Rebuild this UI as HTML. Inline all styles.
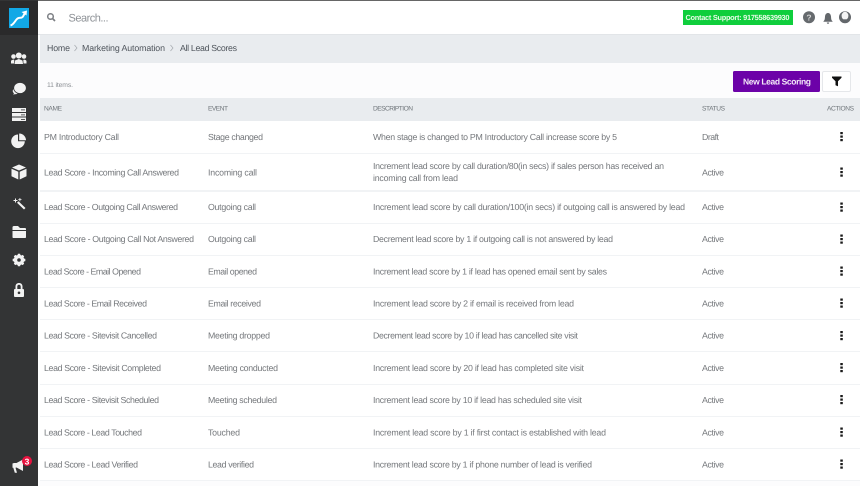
<!DOCTYPE html>
<html><head><meta charset="utf-8"><title>All Lead Scores</title>
<style>
html,body{margin:0;padding:0;width:860px;height:486px;overflow:hidden;background:#fff}
svg{display:block;filter:blur(.35px)}
text{font-family:"Liberation Sans",Arial,sans-serif;text-rendering:geometricPrecision}
.t text{font-size:8.8px;fill:#75787c}
.h text{font-size:6.6px;fill:#70767b}
.b text{font-size:8.8px;fill:#4f555c}
</style></head><body>
<svg xmlns="http://www.w3.org/2000/svg" width="860" height="486" viewBox="0 0 860 486">
<defs><g id="k" fill="#1a1a1a"><rect x="840.300" y="0" width="2.500" height="2.200"/><rect x="840.300" y="3.500" width="2.500" height="2.200"/><rect x="840.300" y="7" width="2.500" height="2.200"/></g></defs>
<rect width="860" height="486" fill="#fff"/>
<rect x="38" y="35" width="822" height="28" fill="#e9ecef"/>
<rect x="38" y="34" width="822" height="1" fill="#e2e5e8"/>
<rect x="38" y="63" width="822" height="35" fill="#fcfcfd"/>
<rect x="40" y="98" width="820" height="23" fill="#e9ecef"/>
<rect x="38" y="35" width="2" height="451" fill="#fff"/>
<rect x="0" y="0" width="860" height="1" fill="#666"/>
<rect x="0" y="0" width="38" height="486" fill="#333435"/>
<rect x="0" y="1" width="38" height="34" fill="#2a2a2b"/>
<!-- logo -->
<rect x="9" y="8" width="20" height="20" fill="#12a8e6"/>
<path d="M10.500 25.500C14 24.500 15 20.500 17.500 18.500C20 16.800 21.500 18.800 23 16.500L25.500 12" fill="none" stroke="#fff" stroke-width="2"/>
<path d="M21.500 12L27 10.500L26.500 15.500Z" fill="#fff"/>
<!-- sidebar icons -->
<g fill="#f2f2f2">
<circle cx="18.800" cy="55.500" r="3"/><path d="M14.500 64L15 60.500L18.800 59L22.500 60.500L23 64Z"/>
<circle cx="13.500" cy="56.500" r="2.300"/><path d="M11 63.500H14L14.300 60L13.500 59.500L11.500 60.300L11 61Z"/>
<circle cx="24" cy="56.500" r="2.300"/><path d="M26.500 63.500H23.500L23.300 60L24 59.500L26 60.300L26.500 61Z"/>
<ellipse cx="16" cy="91" rx="3.300" ry="3"/>
<path d="M13 94.500L15 92.500L17 94Z"/>
<ellipse cx="20" cy="88" rx="6.300" ry="5.500" stroke="#333435" stroke-width=".8"/>
<path d="M12 108H26V112H12ZM12 113H26V116.500H12ZM12 117.500H26V121H12Z"/>
<path d="M18 134.500A6.800 6.800 0 1 0 24.800 141.300H18Z"/>
<path d="M19.200 133.500A6.800 6.800 0 0 1 26 140.200H19.200Z"/>
<path d="M19 164.500L26 167.500L19 170.500L12 167.500ZM11.500 168.800L18.300 171.800V179.500L11.500 176.300ZM26.500 168.800V176.300L19.700 179.500V171.800Z"/>
<path d="M17 202.800L18.500 201.300L25.500 208L24 209.500Z"/>
<path d="M15 198.500h1v1.500h1.500v1H16v1.500h-1V201h-1.500v-1H15ZM19.500 198h.8v1.200h1.200v.8h-1.200v1.200h-.8V200h-1.200v-.8h1.200Z"/>
<path d="M12.500 227.500C12.500 226.500 13 226 14 226H18L20 228H25C25.800 228 26 228.500 26 229.200V230H12.500ZM12.500 231H26V237C26 237.700 25.700 238 25 238H13.500C12.800 238 12.500 237.700 12.500 237Z"/>
<g transform="translate(19 260) scale(.72) translate(-19 -263.200)"><path fill-rule="evenodd" d="M17.500 254.500H20.500L21 256.300L22.500 257L24.200 256L26.200 258.100L25.300 259.700L26 261.200L27.800 261.700V264.700L26 265.200L25.300 266.700L26.200 268.300L24.200 270.400L22.500 269.400L21 270.100L20.500 271.900H17.500L17 270.100L15.500 269.400L13.800 270.400L11.800 268.300L12.700 266.700L12 265.200L10.200 264.700V261.700L12 261.200L12.700 259.700L11.800 258.100L13.800 256L15.500 257L17 256.300ZM19 260.700A2.500 2.500 0 1 0 19 265.700A2.500 2.500 0 1 0 19 260.700Z"/></g>
<path fill-rule="evenodd" d="M15 289H15.500V286.500C15.500 284.200 17 283 19 283S22.500 284.200 22.500 286.500V289H23C23.600 289 24 289.400 24 290V296C24 296.600 23.600 297 23 297H15C14.400 297 14 296.600 14 296V290C14 289.400 14.400 289 15 289ZM17.300 289H20.700V286.500C20.700 285.300 20 284.700 19 284.700S17.300 285.300 17.300 286.500ZM19 291.500A1.300 1.300 0 1 0 19 294.100A1.300 1.300 0 1 0 19 291.500Z"/>
<path d="M12.500 463.500L14 463H16.500L23 459.500V471L16.500 467.500L15.500 467.800L17 472.800H14.800L13.300 467.800H12.500Z"/>
</g>
<g fill="#333435"><rect x="21" y="109.500" width="4" height=".8"/><rect x="21" y="114.500" width="4" height=".8"/><rect x="21" y="119" width="4" height=".8"/></g>
<circle cx="27" cy="461" r="5" fill="#e8123f"/>
<text x="27" y="464.300" font-size="8.500" font-weight="bold" fill="#fff" text-anchor="middle">3</text>
<!-- search -->
<circle cx="50.500" cy="16.500" r="2.800" fill="none" stroke="#7c7f84" stroke-width="1.500"/>
<path d="M52.500 18.500L55 21" stroke="#7c7f84" stroke-width="1.700"/>
<text x="68.500" y="21.500" font-size="11" fill="#8d9196" textLength="40">Search...</text>
<!-- breadcrumbs -->
<g class="b">
<text x="47" y="51" textLength="23">Home</text>
<text x="82" y="51" textLength="83">Marketing Automation</text>
<text x="180" y="51" textLength="57">All Lead Scores</text>
</g>
<path d="M74.500 45L77 48L74.500 51M170.500 45L173 48L170.500 51" fill="none" stroke="#a5a9ae" stroke-width=".7"/>
<text x="47" y="87" font-size="6.800" fill="#8d9196" textLength="26">11 items.</text>
<!-- top right -->
<rect x="683" y="10" width="110" height="15" fill="#0fce3c"/>
<text x="685.500" y="20" font-size="7.400" font-weight="bold" fill="#eafbe9" textLength="104">Contact Support: 917558639930</text>
<circle cx="809" cy="17.300" r="6" fill="#666a6e"/>
<text x="809" y="20.500" font-size="8.500" font-weight="bold" fill="#d6d6d6" text-anchor="middle">?</text>
<path d="M823.500 21.200C825 20 824.800 18.500 825 16.500C825.200 14.300 826.500 13 828 13S830.800 14.300 831 16.500C831.200 18.500 831 20 832.500 21.200V21.800H823.500ZM826.800 22.500H829.200C829.200 23.500 828.700 23.800 828 23.800S826.800 23.500 826.800 22.500Z" fill="#63676b"/>
<circle cx="845" cy="17.300" r="6" fill="#63676b"/>
<ellipse cx="845" cy="15.800" rx="3.400" ry="4" fill="#f4f4f4"/>
<path d="M840.500 20.500C842 18.800 848 18.800 849.500 20.500L847.500 22.500H842.500Z" fill="#63676b"/>
<!-- buttons -->
<rect x="733" y="71" width="87" height="21" rx="1.500" fill="#6c02a8"/>
<text x="743" y="84.500" font-size="8.500" font-weight="bold" fill="#f3e8f8" textLength="68">New Lead Scoring</text>
<rect x="822.500" y="71.500" width="28" height="20" rx="1.500" fill="#fff" stroke="#e5e7ea"/>
<path d="M832 76.500H841.500V77.800L838 81.300V86.300L835.500 85.300V81.300L832 77.800Z" fill="#111"/>
<!-- table header -->
<g class="h">
<text x="44" y="110.500" textLength="18">NAME</text>
<text x="208" y="110.500" textLength="20">EVENT</text>
<text x="373" y="110.500" textLength="40">DESCRIPTION</text>
<text x="702" y="110.500" textLength="23">STATUS</text>
<text x="827" y="110.500" textLength="27">ACTIONS</text>
</g>
<!-- row lines -->
<g fill="#f1f3f5">
<rect x="40" y="153" width="820" height="1"/><rect x="40" y="190" width="820" height="2"/>
<rect x="40" y="223" width="820" height="1"/><rect x="40" y="255" width="820" height="1"/>
<rect x="40" y="287" width="820" height="1"/><rect x="40" y="319" width="820" height="1"/>
<rect x="40" y="351" width="820" height="1"/><rect x="40" y="384" width="820" height="1"/>
<rect x="40" y="416" width="820" height="1"/><rect x="40" y="448" width="820" height="1"/>
<rect x="40" y="480" width="820" height="1"/>
</g>
<rect x="40" y="481" width="820" height="5" fill="#fcfcfd"/>
<g class="t">
<text x="44" y="140" textLength="75">PM Introductory Call</text>
<text x="208" y="140" textLength="55">Stage changed</text>
<text x="373" y="140" textLength="244">When stage is changed to PM Introductory Call increase score by 5</text>
<text x="702" y="140" textLength="17">Draft</text>

<text x="44" y="175.500" textLength="135">Lead Score - Incoming Call Answered</text>
<text x="208" y="175.500" textLength="49">Incoming call</text>
<text x="373" y="169" textLength="291">Increment lead score by call duration/80(in secs) if sales person has received an</text>
<text x="373" y="181" textLength="85">incoming call from lead</text>
<text x="702" y="175.500" textLength="22">Active</text>

<text x="44" y="210" textLength="134">Lead Score - Outgoing Call Answered</text>
<text x="208" y="210" textLength="48">Outgoing call</text>
<text x="373" y="210" textLength="312">Increment lead score by call duration/100(in secs) if outgoing call is answered by lead</text>
<text x="702" y="210" textLength="22">Active</text>

<text x="44" y="242" textLength="150">Lead Score - Outgoing Call Not Answered</text>
<text x="208" y="242" textLength="48">Outgoing call</text>
<text x="373" y="242" textLength="240">Decrement lead score by 1 if outgoing call is not answered by lead</text>
<text x="702" y="242" textLength="22">Active</text>

<text x="44" y="274.500" textLength="97">Lead Score - Email Opened</text>
<text x="208" y="274.500" textLength="49">Email opened</text>
<text x="373" y="274.500" textLength="234">Increment lead score by 1 if lead has opened email sent by sales</text>
<text x="702" y="274.500" textLength="22">Active</text>

<text x="44" y="306.500" textLength="103">Lead Score - Email Received</text>
<text x="208" y="306.500" textLength="53">Email received</text>
<text x="373" y="306.500" textLength="201">Increment lead score by 2 if email is received from lead</text>
<text x="702" y="306.500" textLength="22">Active</text>

<text x="44" y="338.500" textLength="113">Lead Score - Sitevisit Cancelled</text>
<text x="208" y="338.500" textLength="62">Meeting dropped</text>
<text x="373" y="338.500" textLength="205">Decrement lead score by 10 if lead has cancelled site visit</text>
<text x="702" y="338.500" textLength="22">Active</text>

<text x="44" y="371" textLength="117">Lead Score - Sitevisit Completed</text>
<text x="208" y="371" textLength="70">Meeting conducted</text>
<text x="373" y="371" textLength="211">Increment lead score by 20 if lead has completed site visit</text>
<text x="702" y="371" textLength="22">Active</text>

<text x="44" y="403" textLength="115">Lead Score - Sitevisit Scheduled</text>
<text x="208" y="403" textLength="69">Meeting scheduled</text>
<text x="373" y="403" textLength="209">Increment lead score by 10 if lead has scheduled site visit</text>
<text x="702" y="403" textLength="22">Active</text>

<text x="44" y="435.500" textLength="98">Lead Score - Lead Touched</text>
<text x="208" y="435.500" textLength="32">Touched</text>
<text x="373" y="435.500" textLength="233">Increment lead score by 1 if first contact is established with lead</text>
<text x="702" y="435.500" textLength="22">Active</text>

<text x="44" y="467.500" textLength="94">Lead Score - Lead Verified</text>
<text x="208" y="467.500" textLength="46">Lead verified</text>
<text x="373" y="467.500" textLength="219">Increment lead score by 1 if phone number of lead is verified</text>
<text x="702" y="467.500" textLength="22">Active</text>
</g>
<!-- kebabs -->
<use href="#k" y="132"/><use href="#k" y="167.500"/><use href="#k" y="202.500"/><use href="#k" y="234.500"/>
<use href="#k" y="266.500"/><use href="#k" y="298.500"/><use href="#k" y="331"/><use href="#k" y="363"/>
<use href="#k" y="395"/><use href="#k" y="427.500"/><use href="#k" y="459.500"/>
</svg>
</body></html>
